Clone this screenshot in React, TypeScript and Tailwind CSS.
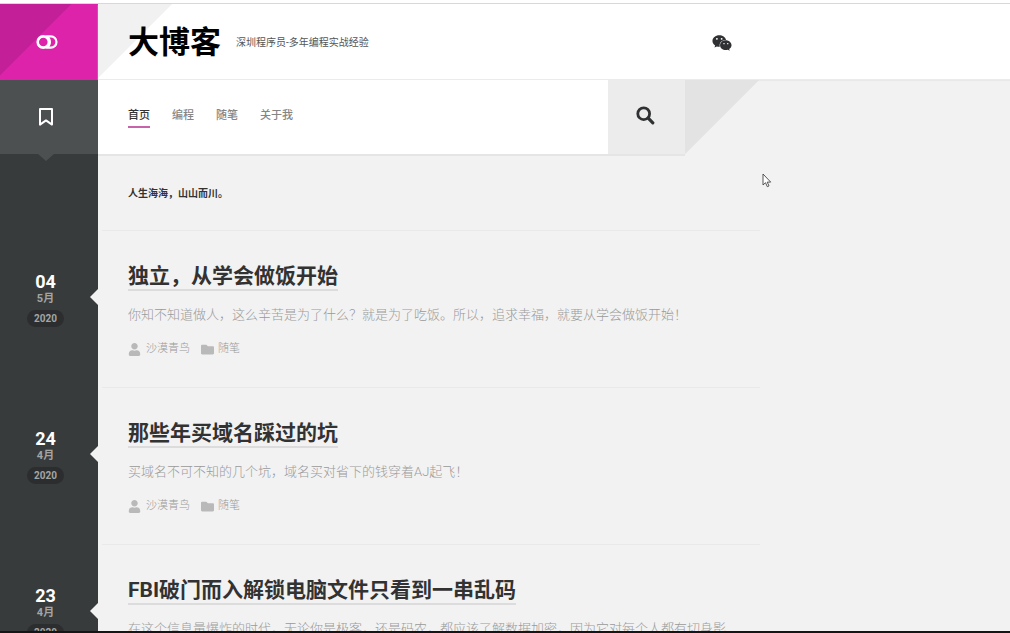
import React from "react";
import { FaFolder, FaUser, FaWeixin } from "react-icons/fa";

type Post = {
  day: string;
  month: string;
  year: string;
  title: string;
  excerpt: string;
};

const posts: Post[] = [
  {
    day: "04",
    month: "5月",
    year: "2020",
    title: "独立，从学会做饭开始",
    excerpt:
      "你知不知道做人，这么辛苦是为了什么？就是为了吃饭。所以，追求幸福，就要从学会做饭开始！",
  },
  {
    day: "24",
    month: "4月",
    year: "2020",
    title: "那些年买域名踩过的坑",
    excerpt: "买域名不可不知的几个坑，域名买对省下的钱穿着AJ起飞！",
  },
  {
    day: "23",
    month: "4月",
    year: "2020",
    title: "FBI破门而入解锁电脑文件只看到一串乱码",
    excerpt:
      "在这个信息量爆炸的时代，无论你是极客，还是码农，都应该了解数据加密，因为它对每个人都有切身影",
  },
];

const navItems = ["首页", "编程", "随笔", "关于我"];

function ToggleIcon() {
  return (
    <svg width="22" height="14" viewBox="0 0 22 14" fill="none" stroke="#fff" strokeWidth="2.6">
      <circle cx="7.3" cy="7" r="5.6" />
      <path d="M10.5 1.4h4.4a5.6 5.6 0 0 1 0 11.2h-4.4q3.4-2 3.4-5.6t-3.4-5.6z" strokeWidth="2.2" strokeLinejoin="round" />
    </svg>
  );
}

function BookmarkIcon() {
  return (
    <svg width="16" height="20" viewBox="0 0 16 20" fill="none" stroke="#fff" strokeWidth="2">
      <path d="M2 2h12v15.6l-6-4.2-6 4.2z" strokeLinejoin="round" />
    </svg>
  );
}

function SearchIcon() {
  return (
    <svg width="19" height="19" viewBox="0 0 19 19" fill="none" stroke="#2f3132">
      <circle cx="7.7" cy="7.7" r="5.9" strokeWidth="2.8" />
      <path d="m12.2 12.2 4.6 4.6" strokeWidth="3.2" strokeLinecap="round" />
    </svg>
  );
}

function PostRow({ post }: { post: Post }) {
  return (
    <article className="flex shrink-0">
      <div className="relative flex w-[98px] shrink-0 flex-col items-center bg-[#383b3c] pt-[41px] pr-[7px] font-bold">
        <span className="text-[18px] leading-5 text-white">{post.day}</span>
        <span className="text-[11px] leading-[14px] text-[#a3a5a5]">{post.month}</span>
        <span className="mt-1 rounded-full bg-[#2b2d2e] px-[7px] text-[10px] leading-[17px] text-[#a3a5a5]">
          {post.year}
        </span>
        <span className="absolute top-[58px] right-0 size-0 border-y-8 border-r-8 border-y-transparent border-r-[#f2f2f2]" />
      </div>
      <div className="max-w-[662px] flex-1 pl-1">
        <div className="border-b border-[#e9e9e9] pt-[30px] pr-7 pb-7 pl-[26px]">
          <h2 className="flex text-[21px] leading-[25px] font-bold">
            <a href="#" className="border-b-2 border-[#dcdcdc] pt-[3px] whitespace-nowrap text-[#323232]">
              {post.title}
            </a>
          </h2>
          <p className="mt-[14px] text-[13px] leading-5 font-light whitespace-nowrap text-[#9a9a9a]">
            {post.excerpt}
          </p>
          <div className="mt-[14px] flex items-center text-[11px] leading-5 font-light text-[#999]">
            <FaUser className="mr-[5px] text-[13px] text-[#b9b9b9]" />
            <a href="#">沙漠青鸟</a>
            <FaFolder className="mr-1 ml-[11px] text-[13px] text-[#b9b9b9]" />
            <a href="#">随笔</a>
          </div>
        </div>
      </div>
    </article>
  );
}

export default function App() {
  return (
    <div className="flex h-screen flex-col overflow-hidden bg-[#f2f2f2] font-[Roboto,'Noto_Sans_CJK_SC',sans-serif]" lang="zh-CN">
      <div className="h-1 shrink-0 border-b border-[#d5d8dc] bg-white" />

      <div className="flex min-h-0 flex-1 flex-col overflow-hidden">
        <header className="flex shrink-0">
          <button
            aria-label="切换侧栏"
            className="flex h-19 w-[98px] shrink-0 items-center justify-center bg-[linear-gradient(135deg,#c21f98_50px,#dc23aa_51px)] pr-[5px]"
          >
            <ToggleIcon />
          </button>
          <div className="flex-1 border-b border-[#ebebeb] bg-[linear-gradient(135deg,#f1f1f1_52px,#fff_53px)] shadow-[0_1px_1px_#e9e9e9]">
            <div className="flex h-full max-w-[662px] items-center pt-[3px] pr-7 pl-[30px]">
              <h1 className="text-[31px] leading-10 font-bold text-black">
                <a href="#">大博客</a>
              </h1>
              <p className="ml-[15px] text-[10px] leading-4 text-[#555]">深圳程序员-多年编程实战经验</p>
              <a href="#" aria-label="微信" className="ml-auto text-[20px] text-[#2f3132]">
                <FaWeixin />
              </a>
            </div>
          </div>
        </header>

        <div className="flex shrink-0">
          <button
            aria-label="书签"
            className="relative z-10 flex h-[74px] w-[98px] shrink-0 items-center justify-center bg-[#4d5051] pr-[7px]"
          >
            <BookmarkIcon />
            <span className="absolute top-full left-[38px] size-0 border-x-8 border-t-[7px] border-x-transparent border-t-[#4d5051]" />
          </button>
          <div className="flex max-w-[662px] flex-1">
            <nav className="flex flex-1 items-center gap-[22px] bg-white pb-[1px] pl-[30px] text-[11px] leading-5 font-medium shadow-[0_2px_0_#e5e5e5]">
              {navItems.map((item, i) => (
                <a
                  key={item}
                  href="#"
                  className={
                    i === 0
                      ? "border-b-2 border-[#c763a8] text-[#333]"
                      : "border-b-2 border-transparent text-[#858585]"
                  }
                >
                  {item}
                </a>
              ))}
            </nav>
            <button
              aria-label="搜索"
              className="flex w-[77px] items-center justify-center bg-[#ececec] pr-[2px] pb-[3px] shadow-[0_2px_0_#e5e5e5]"
            >
              <SearchIcon />
            </button>
            <div className="w-[75px] bg-[linear-gradient(135deg,#e3e3e3_52px,transparent_53px)]" />
          </div>
        </div>

        <div className="flex shrink-0">
          <div className="w-[98px] shrink-0 bg-[#383b3c]" />
          <div className="max-w-[662px] flex-1 pl-1">
            <p className="border-b border-[#e9e9e9] pt-[30px] pb-[26px] pl-[26px] text-[10px] leading-5 font-bold text-[#333]">
              人生海海，山山而川。
            </p>
          </div>
        </div>

        {posts.map((post) => (
          <PostRow key={post.title} post={post} />
        ))}
      </div>

      <div className="h-[2px] shrink-0 bg-[#151515]" />

      <svg
        className="pointer-events-none absolute top-[173px] left-[762px]"
        width="10"
        height="15"
        viewBox="0 0 10 15"
        fill="#fff"
        stroke="#444"
        strokeWidth="0.9"
      >
        <path d="M1 1v11l2.5-2.3 1.8 4 1.7-.8-1.8-3.8h3.5z" />
      </svg>
    </div>
  );
}
